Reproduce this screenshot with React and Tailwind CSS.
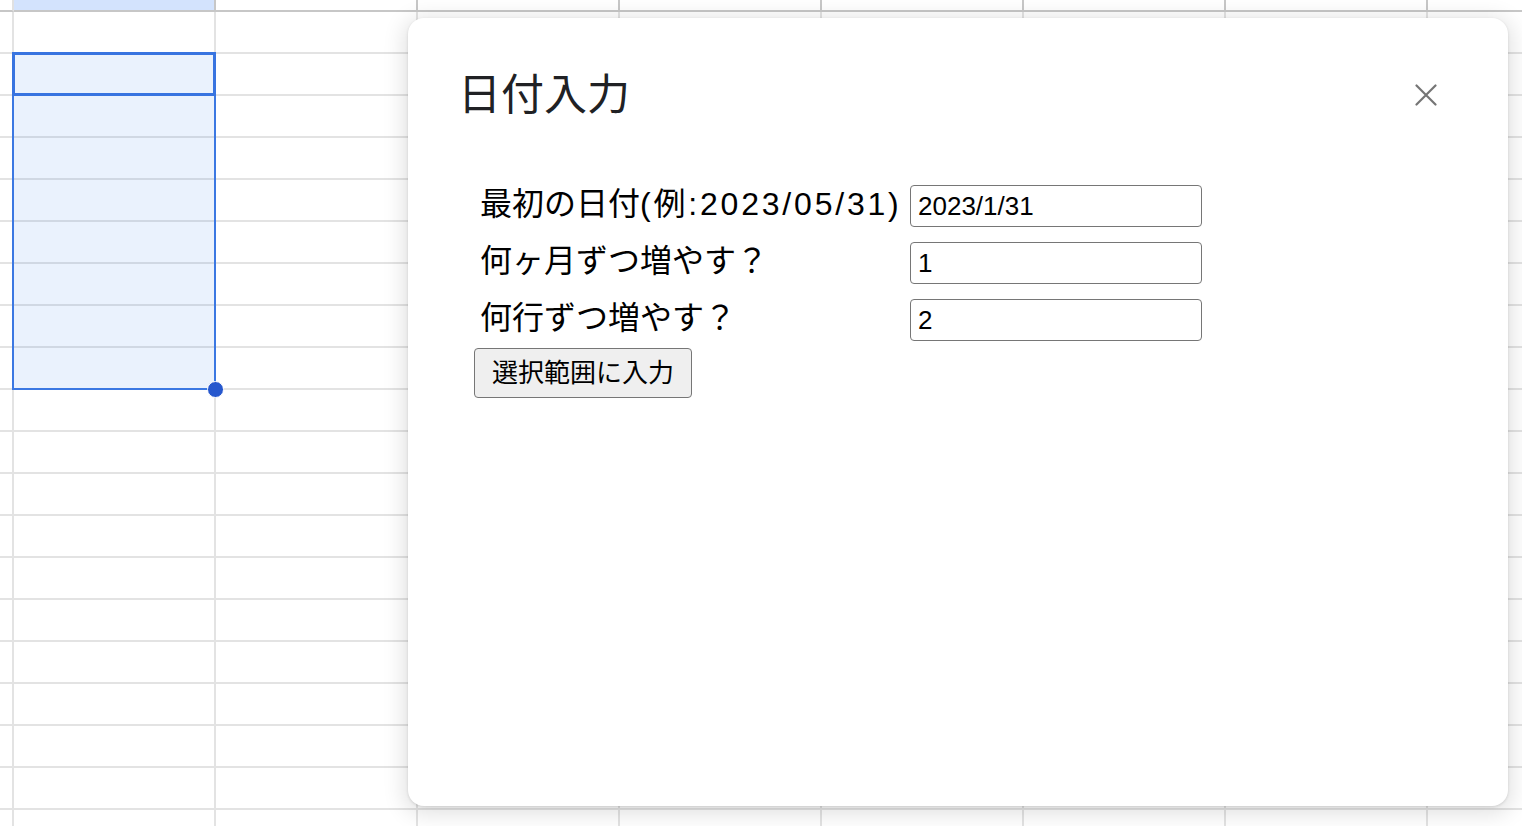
import React from "react";

const FONT = "[font-family:'Liberation_Sans','Noto_Sans_CJK_JP',sans-serif]";

function SheetGrid() {
  const cols = 9;
  const rows = 21;
  const cells = [];
  for (let r = 0; r < rows; r++) {
    for (let c = 0; c < cols; c++) {
      let cls = "border-r-2 border-b-2 ";
      if (r === 0) {
        cls += c === 0 ? "border-r-[#e1e1e1] border-b-[#c7c7c7] " : "border-[#c7c7c7] ";
        if (c === 1) cls += "bg-[#d3e3fd] ";
      } else {
        cls += "border-[#e3e3e3] ";
      }
      cells.push(<div key={r + "-" + c} className={cls} />);
    }
  }
  return (
    <div className="grid grid-cols-[14px_repeat(8,202px)] grid-rows-[12px_repeat(20,42px)]">
      {cells}
    </div>
  );
}

export default function App() {
  return (
    <div className={"relative w-[1522px] h-[826px] overflow-hidden bg-white " + FONT}>
      <SheetGrid />

      {/* selection overlay */}
      <div className="absolute left-[12px] top-[52px] w-[204px] h-[338px] bg-[rgba(26,115,232,0.09)] border-2 border-[#3b78e2]" />
      <div className="absolute left-[12px] top-[52px] w-[204px] h-[44px] border-[3px] border-[#3874e0]" />
      <div className="absolute left-[207px] top-[381px] w-[17px] h-[17px] rounded-full bg-[#2657cd] border-[1.5px] border-white" />

      {/* dialog */}
      <div className="absolute left-[408px] top-[18px] w-[1100px] h-[788px] bg-white rounded-[16px] shadow-[0_4px_22px_4px_rgba(0,0,0,0.12),0_1px_3px_rgba(0,0,0,0.12)]">
        <div className="flex items-center justify-between pl-[50px] pr-[71px] pt-[52px]">
          <div className="text-[43px] leading-[50px] text-[#202124]">日付入力</div>
          <svg width="22" height="22" viewBox="0 0 22 22" className="block">
            <path d="M1.5 1.5 L20.5 20.5 M20.5 1.5 L1.5 20.5" stroke="#757575" strokeWidth="2.2" strokeLinecap="round" />
          </svg>
        </div>

        <div className="pl-[66px] pt-[65px] text-black">
          <div className="grid grid-cols-[436px_292px] gap-y-[15px]">
            <div className="pl-[6px] text-[32px] leading-[42px] h-[42px] -mt-[2px] whitespace-nowrap">
              最初の日付<span className="tracking-[2.8px]">(例:2023/05/31)</span>
            </div>
            <input
              className={"h-[42px] w-[292px] border border-[#767676] rounded-[4px] px-[7px] text-[26px] text-black outline-none " + FONT}
              defaultValue="2023/1/31"
            />
            <div className="pl-[6px] text-[32px] leading-[42px] h-[42px] -mt-[2px] whitespace-nowrap">何ヶ月ずつ増やす？</div>
            <input
              className={"h-[42px] w-[292px] border border-[#767676] rounded-[4px] px-[7px] text-[26px] text-black outline-none " + FONT}
              defaultValue="1"
            />
            <div className="pl-[6px] text-[32px] leading-[42px] h-[42px] -mt-[2px] whitespace-nowrap">何行ずつ増やす？</div>
            <input
              className={"h-[42px] w-[292px] border border-[#767676] rounded-[4px] px-[7px] text-[26px] text-black outline-none " + FONT}
              defaultValue="2"
            />
          </div>
          <button
            className={"mt-[7px] w-[218px] h-[50px] bg-[#efefef] border border-[#767676] rounded-[4px] text-[26px] text-black flex items-center justify-center " + FONT}
          >
            選択範囲に入力
          </button>
        </div>
      </div>
    </div>
  );
}
